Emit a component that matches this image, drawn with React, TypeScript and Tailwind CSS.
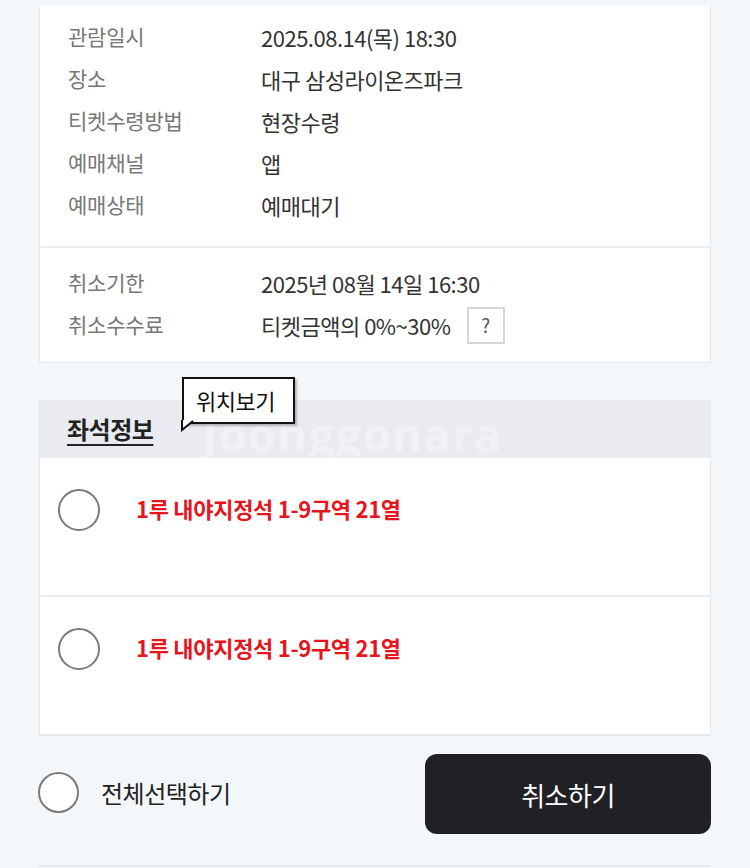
import React from "react";

const font = { fontFamily: '"Noto Sans CJK KR", "Noto Sans", sans-serif' };

function Row({ label, value, extra }: { label: string; value: string; extra?: React.ReactNode }) {
  return (
    <div className="flex h-[42px] items-center">
      <div className="w-[193px] text-[21px] text-[#777777] tracking-[-0.2px]">{label}</div>
      <div className="flex items-center text-[22px] text-[#333333] tracking-[-0.5px]">
        {value}
        {extra}
      </div>
    </div>
  );
}

function SeatRow({ last }: { last?: boolean }) {
  return (
    <div className={`flex items-start pt-[31px] pl-[18px] ${last ? "h-[137px]" : "h-[139px] border-b-2 border-[#eceef1]"}`}>
      <div className="w-[42px] h-[42px] rounded-full border-2 border-[#7a7a7a] bg-white shrink-0" />
      <div className="ml-[36px] h-[38px] leading-[38px] text-[22px] font-bold text-[#e8141c] tracking-[-0.3px]">
        1루 내야지정석 1-9구역 21열
      </div>
    </div>
  );
}

export default function App() {
  return (
    <div className="w-[750px] h-[868px] overflow-hidden bg-[#f4f7fa] px-[39px]" style={font}>
      <div className="h-[6px]" />
      <div className="bg-white border border-[#e6e9ec] border-t-0 w-[672px]">
        <div className="pl-[28px] pt-[10px] pb-[20px]">
          <Row label="관람일시" value="2025.08.14(목) 18:30" />
          <Row label="장소" value="대구 삼성라이온즈파크" />
          <Row label="티켓수령방법" value="현장수령" />
          <Row label="예매채널" value="앱" />
          <Row label="예매상태" value="예매대기" />
        </div>
        <div className="border-t-2 border-[#eceef1] pl-[28px] pt-[14px] pb-[16px]">
          <Row label="취소기한" value="2025년 08월 14일 16:30" />
          <Row
            label="취소수수료"
            value="티켓금액의 0%~30%"
            extra={
              <span className="ml-[16px] w-[38px] h-[37px] border-2 border-[#d4d6d9] flex items-center justify-center text-[19px] text-[#555]">
                ?
              </span>
            }
          />
        </div>
      </div>

      <div className="h-[37px]" />

      <div className="bg-white border border-[#e6e9ec] border-t-0 border-b-2 w-[672px] relative">
        <div className="h-[58px] bg-[#e9ebf1] flex items-center pl-[27px] relative">
          <span className="text-[24px] font-bold text-[#222] underline underline-offset-[5px] decoration-2 tracking-[-0.5px]">
            좌석정보
          </span>
          <span className="absolute left-[162px] top-[12px] text-[46px] font-bold text-white/35 tracking-[1px] leading-[44px]" style={{ fontFamily: '"Open Sans", sans-serif' }}>
            Joonggonara
          </span>
        </div>
        <div className="absolute left-[142px] top-[-23px] z-10">
          <div className="relative bg-white border-2 border-[#111] pl-[12px] h-[47px] w-[113px] flex items-center text-[22px] text-[#111] shadow-[2px_2px_2px_rgba(0,0,0,0.25)] tracking-[-0.5px]">
            위치보기
          </div>
          <svg className="absolute left-[-1px] top-[43px]" width="14" height="12" viewBox="0 0 14 12">
            <path d="M1 0 L1 10 L12 1" fill="white" stroke="#111" strokeWidth="2" />
          </svg>
        </div>
        <SeatRow />
        <SeatRow last />
      </div>

      <div className="flex items-start">
        <div className="flex items-center pt-[36px]">
          <div className="w-[41px] h-[41px] rounded-full border-2 border-[#7a7a7a] bg-white -ml-[1px]" />
          <span className="ml-[22px] text-[24px] text-[#222] tracking-[-0.5px]">전체선택하기</span>
        </div>
        <button className="ml-auto mt-[18px] w-[286px] h-[80px] rounded-[12px] bg-[#212125] text-white text-[26px] tracking-[-0.5px]">
          취소하기
        </button>
      </div>
      <div className="mt-[31px] h-[20px] bg-[#eef1f4] border-t border-[#e6e9ec]" />
    </div>
  );
}
